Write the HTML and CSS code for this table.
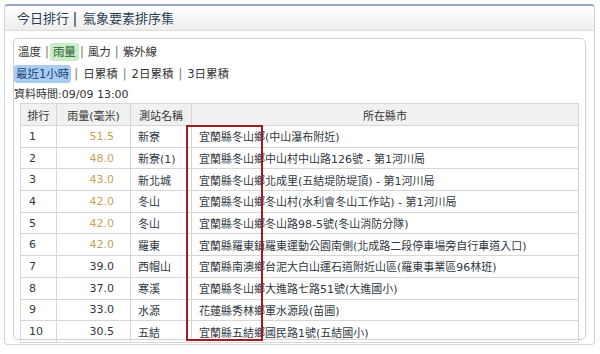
FILE: index.html
```html
<!DOCTYPE html>
<html lang="zh-Hant">
<head>
<meta charset="utf-8">
<title>今日排行</title>
<link rel="stylesheet" href="styles.css">
</head>
<body>
<div class="panel">
  <div class="panel-head">今日排行<b class="bar">|</b>氣象要素排序集</div>
  <div class="inner">
    <div class="tabs tabs-main">
      <span class="tab">溫度</span><span class="sep">|</span><span class="tab on-green">雨量</span><span class="sep">|</span><span class="tab">風力</span><span class="sep">|</span><span class="tab">紫外線</span>
    </div>
    <div class="tabs tabs-sub">
      <span class="tab on-blue">最近1小時</span><span class="sep">|</span><span class="tab">日累積</span><span class="sep">|</span><span class="tab">2日累積</span><span class="sep">|</span><span class="tab">3日累積</span>
    </div>
    <div class="time">資料時間:09/09 13:00</div>
    <div class="table-wrap">
      <table class="rank">
        <thead>
          <tr><th class="c-rank">排行</th><th class="c-rain">雨量(毫米)</th><th class="c-stn">測站名稱</th><th>所在縣市</th></tr>
        </thead>
        <tbody>
          <tr><td class="r">1</td><td class="num hot">51.5</td><td>新寮</td><td>宜蘭縣冬山鄉(中山瀑布附近)</td></tr>
          <tr><td class="r">2</td><td class="num hot">48.0</td><td>新寮(1)</td><td>宜蘭縣冬山鄉中山村中山路126號 - 第1河川局</td></tr>
          <tr><td class="r">3</td><td class="num hot">43.0</td><td>新北城</td><td>宜蘭縣冬山鄉北成里(五結堤防堤頂) - 第1河川局</td></tr>
          <tr><td class="r">4</td><td class="num hot">42.0</td><td>冬山</td><td>宜蘭縣冬山鄉冬山村(水利會冬山工作站) - 第1河川局</td></tr>
          <tr><td class="r">5</td><td class="num hot">42.0</td><td>冬山</td><td>宜蘭縣冬山鄉冬山路98-5號(冬山消防分隊)</td></tr>
          <tr><td class="r">6</td><td class="num hot">42.0</td><td>羅東</td><td>宜蘭縣羅東鎮羅東運動公園南側(北成路二段停車場旁自行車道入口)</td></tr>
          <tr><td class="r">7</td><td class="num">39.0</td><td>西帽山</td><td>宜蘭縣南澳鄉台泥大白山運石道附近山區(羅東事業區96林班)</td></tr>
          <tr><td class="r">8</td><td class="num">37.0</td><td>寒溪</td><td>宜蘭縣冬山鄉大進路七路51號(大進國小)</td></tr>
          <tr><td class="r">9</td><td class="num">33.0</td><td>水源</td><td>花蓮縣秀林鄉軍水源段(苗圃)</td></tr>
          <tr><td class="r">10</td><td class="num">30.5</td><td>五結</td><td>宜蘭縣五結鄉國民路1號(五結國小)</td></tr>
        </tbody>
      </table>
      <div class="mark"></div>
    </div>
  </div>
</div>
</body>
</html>
```

FILE: styles.css
```css
html, body {
  margin: 0;
  padding: 0;
  background: #ffffff;
}
body {
  font-family: "DejaVu Sans", "Noto Sans CJK TC", sans-serif;
  color: #333;
}
.panel {
  margin: 4px 5px 0 4px;
  height: 341px;
  border: 1px solid #cdd6dd;
  border-top: 2px solid #93a9c6;
  border-radius: 4px;
  box-sizing: border-box;
  overflow: hidden;
}
.panel-head {
  height: 24px;
  line-height: 24px;
  padding-left: 12px;
  font-size: 13px;
  color: #2a3d52;
  background: linear-gradient(#ffffff, #eeeeee);
  border-bottom: 1px solid #dcdcdc;
  font-family: "Noto Sans CJK TC", sans-serif;
}
.bar {
  font-weight: bold;
  margin: 0 6px 0 4px;
}
.inner {
  margin: 7px 8px 0 8px;
  height: 302px;
  border: 1px solid #d0d0d0;
  border-radius: 5px;
  box-sizing: border-box;
}
.tabs {
  display: flex;
  align-items: center;
  font-size: 11.5px;
  height: 20px;
}
.tabs-main {
  margin-top: 3px;
  padding-left: 1px;
}
.tabs-sub {
  margin-top: 2px;
  padding-left: 0;
}
.tab {
  padding: 0 2px;
  height: 18px;
  line-height: 18px;
  border-radius: 3px;
  color: #333;
}
.tabs-main .tab {
  padding: 0 3px;
}
.on-green {
  background: #c9eec6;
  color: #2a5a36;
}
.on-blue {
  background: #a9cdf2;
  color: #1b3f77;
}
.sep {
  color: #777;
  margin: 0 3px;
}
.tabs-main .sep {
  margin: 0 1px;
}
.time {
  font-size: 11px;
  height: 16px;
  line-height: 16px;
  margin-top: 3px;
  padding-left: 0;
}
.table-wrap {
  position: relative;
  margin-left: 6px;
  width: 559px;
}
.rank {
  width: 100%;
  border-collapse: collapse;
  font-size: 11px;
  table-layout: fixed;
}
.rank th {
  background: #f1f1f1;
  font-weight: normal;
  height: 21px;
  border: 1px solid #d7d7d7;
  text-align: center;
  color: #333;
  padding: 0;
}
.rank .c-rank { width: 35px; }
.rank .c-rain { width: 73px; }
.rank .c-stn { width: 60px; }
.rank td {
  height: 20.7px;
  border: 1px solid #d7d7d7;
  padding: 0 0 0 7px;
  white-space: nowrap;
  overflow: hidden;
  color: #2f3740;
}
.rank td.r {
  padding-left: 8px;
}
.rank td.num {
  text-align: right;
  padding: 0 16px 0 0;
}
.rank td.hot {
  color: #c8a355;
}
.mark {
  position: absolute;
  left: 166px;
  top: 22px;
  width: 77px;
  height: 216px;
  border: 2px solid #a31b22;
  box-sizing: border-box;
}
```
